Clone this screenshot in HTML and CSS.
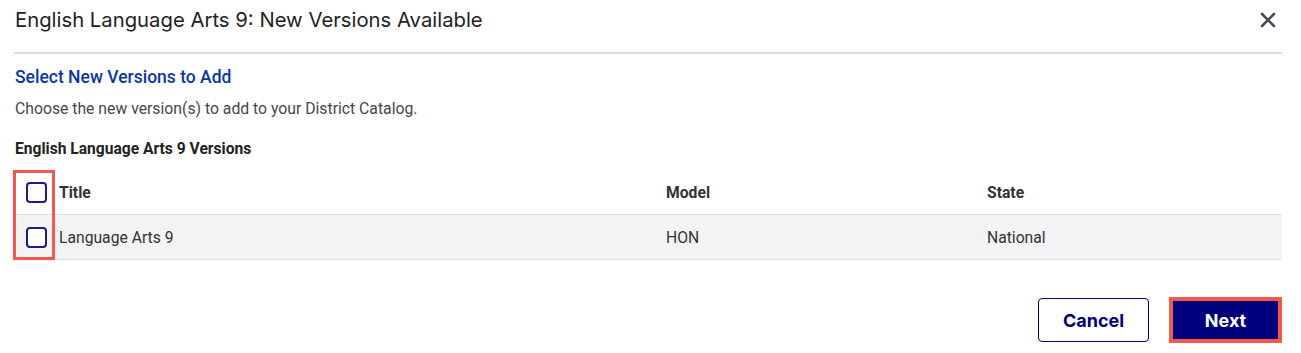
FILE: index.html
```html
<!DOCTYPE html>
<html lang="en">
<head>
  <meta charset="UTF-8">
  <meta name="viewport" content="width=device-width, initial-scale=1.0">
  <title>New Versions Available</title>
  <link rel="stylesheet" href="styles.css">
</head>
<body>
  <div class="modal">
    <!-- Modal header -->
    <header class="modal-header">
      <h1>English Language Arts 9: New Versions Available</h1>
      <button class="close-btn" aria-label="Close">
        <svg width="16" height="16" viewBox="0 0 16 16">
          <path d="M2 2 L14 14 M14 2 L2 14" stroke="#4b4b5c" stroke-width="2.6" stroke-linecap="round"/>
        </svg>
      </button>
    </header>

    <!-- Body -->
    <h2 class="section-title">Select New Versions to Add</h2>
    <p class="hint">Choose the new version(s) to add to your District Catalog.</p>
    <h3 class="table-title">English Language Arts 9 Versions</h3>

    <div class="versions">
      <div class="row head">
        <div class="cell check"><span class="checkbox"></span></div>
        <div class="cell">Title</div>
        <div class="cell">Model</div>
        <div class="cell">State</div>
      </div>
      <div class="row item">
        <div class="cell check"><span class="checkbox"></span></div>
        <div class="cell">Language Arts 9</div>
        <div class="cell">HON</div>
        <div class="cell">National</div>
      </div>
      <div class="highlight"></div>
    </div>

    <!-- Footer -->
    <footer class="modal-footer">
      <button class="btn btn-cancel">Cancel</button>
      <button class="btn btn-next">Next</button>
    </footer>
  </div>
</body>
</html>
```

FILE: styles.css
```css
/* Base */
* {
  margin: 0;
  padding: 0;
  box-sizing: border-box;
}

body {
  font-family: Roboto, "Liberation Sans", sans-serif;
  background-color: #fff;
  color: #333;
}

.modal {
  padding: 0 19px 0 14px;
}

/* Header */
.modal-header {
  display: flex;
  justify-content: space-between;
  align-items: center;
  padding: 8px 0 20px 1px;
  border-bottom: 2px solid #dddde1;
}

.modal-header h1 {
  font-family: Inter, sans-serif;
  font-size: 20.3px;
  font-weight: 400;
  line-height: 24px;
  color: #222226;
}

.close-btn {
  background: transparent;
  border: none;
  width: 16px;
  height: 16px;
  margin-right: 6px;
  display: flex;
  cursor: pointer;
}

/* Text blocks */
.section-title {
  margin-top: 13px;
  padding-left: 1px;
  font-size: 17.5px;
  font-weight: 500;
  line-height: 20px;
  color: #0b36a8;
}

.hint {
  margin-top: 12px;
  padding-left: 1px;
  font-size: 15.75px;
  line-height: 20px;
  color: #474747;
}

.table-title {
  margin-top: 20px;
  padding-left: 1px;
  font-size: 15.6px;
  font-weight: 700;
  line-height: 20px;
  color: #222;
}

/* Versions table */
.versions {
  position: relative;
  margin-top: 11px;
}

.row {
  display: grid;
  grid-template-columns: 45px 607px 321px 1fr;
  align-items: center;
  height: 45px;
  border-bottom: 1px solid #e0e0e4;
  font-size: 15.7px;
  color: #333;
}

.row.head {
  font-weight: 700;
}

.row.item {
  background-color: #f3f3f5;
}

.cell.check {
  display: flex;
  padding-left: 12px;
}

.checkbox {
  width: 21px;
  height: 21px;
  border: 2px solid #1c1c86;
  border-radius: 4px;
  background: #fff;
}

.highlight {
  position: absolute;
  top: 0;
  left: -1px;
  width: 42px;
  height: 90px;
  border: 3px solid #f2584b;
  pointer-events: none;
}

/* Footer */
.modal-footer {
  display: flex;
  justify-content: flex-end;
  align-items: center;
  gap: 20px;
  margin-top: 37px;
}

.btn {
  font-family: Inter, sans-serif;
  font-size: 18px;
  font-weight: 700;
  cursor: pointer;
}

.btn-cancel {
  width: 111px;
  height: 44px;
  background: #fff;
  color: #00007c;
  border: 1px solid #00007c;
  border-radius: 4px;
}

.btn-next {
  width: 113px;
  height: 46px;
  background: #00007c;
  color: #fff;
  border: 4px solid #f2584b;
}
```
